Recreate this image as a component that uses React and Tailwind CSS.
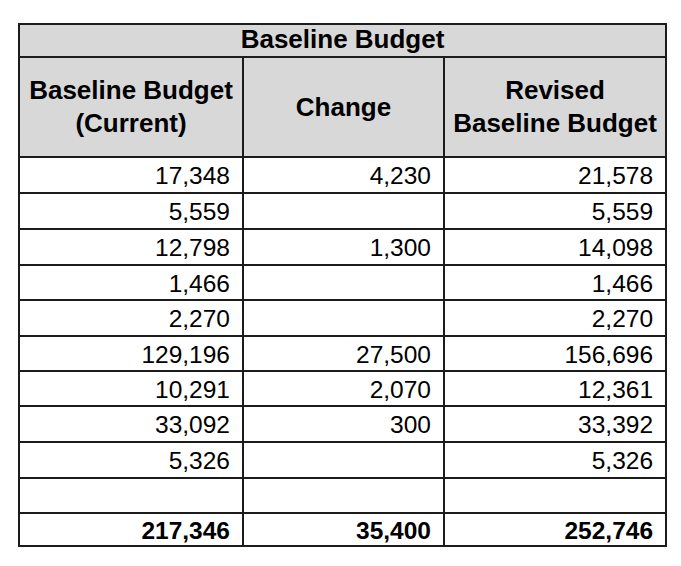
import React from "react";

const rows = [
  ["17,348", "4,230", "21,578", 36],
  ["5,559", "", "5,559", 36],
  ["12,798", "1,300", "14,098", 36],
  ["1,466", "", "1,466", 35],
  ["2,270", "", "2,270", 36],
  ["129,196", "27,500", "156,696", 35],
  ["10,291", "2,070", "12,361", 35],
  ["33,092", "300", "33,392", 36],
  ["5,326", "", "5,326", 36],
  ["", "", "", 35],
];

const cell = "border-2 border-[#1c1c1c] text-right pr-[12px] text-[24.5px] leading-none align-middle pt-[3px]";

export default function App() {
  return (
    <div className="min-h-[566px] w-[681px] bg-white pt-[23px] pl-[18px]" style={{ fontFamily: '"Liberation Sans", Arial, sans-serif' }}>
      <table className="border-collapse text-black table-fixed w-[647px]">
        <colgroup>
          <col className="w-[224px]" />
          <col className="w-[201px]" />
          <col className="w-[222px]" />
        </colgroup>
        <thead>
          <tr className="bg-[#d8d8d8]">
            <th colSpan={3} className="h-[33px] border-2 border-[#1c1c1c] text-[26px] font-bold leading-none text-center pb-[3px]">
              Baseline Budget
            </th>
          </tr>
          <tr className="bg-[#d8d8d8]">
            <th className="h-[100px] border-2 border-[#1c1c1c] text-[26px] font-bold leading-[33px] text-center">
              Baseline Budget<br />(Current)
            </th>
            <th className="border-2 border-[#1c1c1c] text-[26px] font-bold leading-[33px] text-center">Change</th>
            <th className="border-2 border-[#1c1c1c] text-[26px] font-bold leading-[33px] text-center">
              Revised<br />Baseline Budget
            </th>
          </tr>
        </thead>
        <tbody>
          {rows.map((r, i) => (
            <tr key={i} style={{ height: r[3] }}>
              <td className={cell}>{r[0]}</td>
              <td className={cell}>{r[1]}</td>
              <td className={cell}>{r[2]}</td>
            </tr>
          ))}
          <tr className="h-[33px] font-bold">
            <td className={cell}>217,346</td>
            <td className={cell}>35,400</td>
            <td className={cell}>252,746</td>
          </tr>
        </tbody>
      </table>
    </div>
  );
}
